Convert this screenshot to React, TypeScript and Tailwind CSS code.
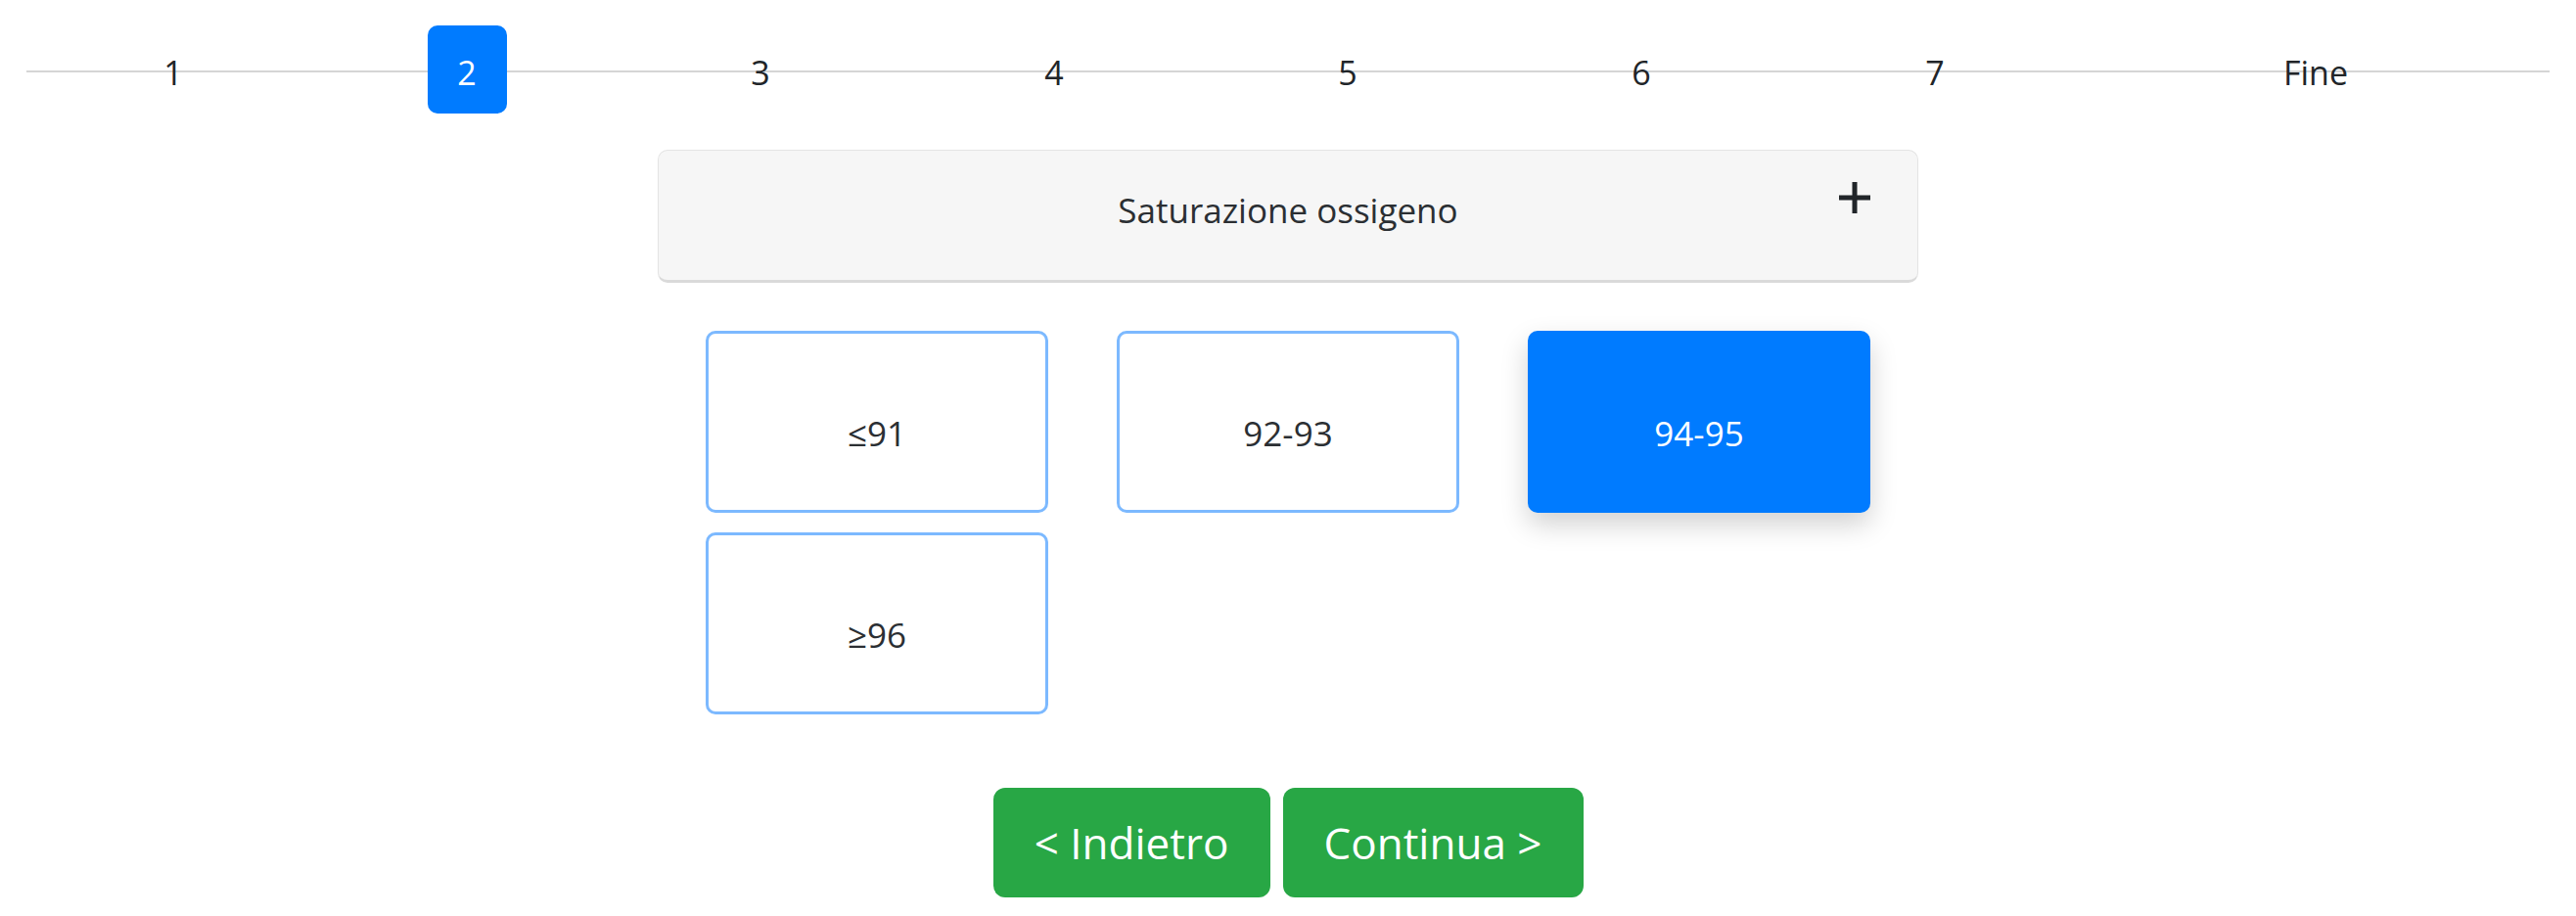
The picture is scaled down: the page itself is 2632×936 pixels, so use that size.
const steps = ["1", "2", "3", "4", "5", "6", "7"];
const options = [
  { label: "≤91", active: false },
  { label: "92-93", active: false },
  { label: "94-95", active: true },
  { label: "≥96", active: false },
];

const App = () => {
  return (
    <div className="w-[2632px] h-[936px] bg-white text-[#212529] font-['Open_Sans',sans-serif]">
      {/* stepper */}
      <div className="relative mx-[27px] pt-[26px]">
        <div className="absolute left-0 right-0 top-[72px] h-[2px] bg-[#d5d5d5]" />
        <div className="relative flex h-[90px] text-[34px]">
          {steps.map((s) => (
            <div key={s} className="w-[300px] flex items-center justify-center">
              {s === "2" ? (
                <span className="w-[81px] h-[90px] pt-[6px] rounded-[10px] bg-[#007bff] text-white flex items-center justify-center">
                  {s}
                </span>
              ) : (
                <span className="pt-[6px]">{s}</span>
              )}
            </div>
          ))}
          <div className="flex-1 flex items-center justify-center pt-[6px]">Fine</div>
        </div>
      </div>

      {/* question header */}
      <div className="relative mx-auto mt-[37px] w-[1288px] h-[136px] rounded-[10px] border border-[#e4e4e4] border-b-[3px] border-b-[#dadada] bg-[#f6f6f6]">
        <p className="pt-[37px] text-center text-[35px] leading-[48px] text-[#2b2f33]">Saturazione ossigeno</p>
        <button className="absolute top-[31px] right-[47px] w-[34px] h-[34px] text-[#212529]">
          <svg viewBox="0 0 34 34" className="w-[34px] h-[34px]" fill="none" stroke="currentColor" strokeWidth="5">
            <path d="M17 1v32M1 17h32" />
          </svg>
        </button>
      </div>

      {/* options */}
      <div className="mt-[49px] grid grid-cols-[repeat(3,350px)] justify-center gap-x-[70px] gap-y-[20px]">
        {options.map((o) => (
          <button
            key={o.label}
            className={
              o.active
                ? "h-[186px] pt-[24px] rounded-[10px] bg-[#007bff] text-white text-[35px] shadow-[0_12px_28px_rgba(0,0,0,0.18)]"
                : "h-[186px] pt-[24px] rounded-[10px] border-[3px] border-[#7cb9ff] bg-white text-[#2b2f33] text-[35px]"
            }
          >
            {o.label}
          </button>
        ))}
      </div>

      {/* navigation */}
      <div className="mt-[75px] flex justify-center gap-[13px]">
        <button className="h-[112px] w-[283px] rounded-[12px] bg-[#28a745] text-white text-[44px]">
          &lt; Indietro
        </button>
        <button className="h-[112px] w-[307px] rounded-[12px] bg-[#28a745] text-white text-[44px]">
          Continua &gt;
        </button>
      </div>
    </div>
  );
};

export default App;
